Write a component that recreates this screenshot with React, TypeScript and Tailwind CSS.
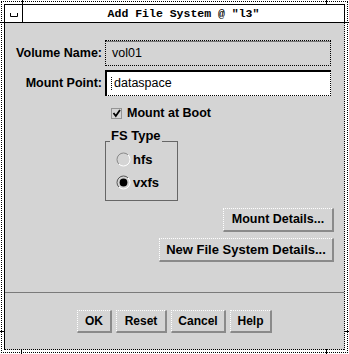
import type { ReactNode } from "react";

function MotifButton({ className, children }: { className: string; children: ReactNode }) {
  return (
    <div
      className={`${className} flex items-center justify-center bg-[#d4d4d4] border border-dotted border-white border-r-2 border-b-2 border-r-[#8a8a8a] border-b-[#8a8a8a] [border-right-style:solid] [border-bottom-style:solid] font-bold leading-none`}
    >
      {children}
    </div>
  );
}

function Radio({ checked }: { checked?: boolean }) {
  return (
    <svg width="15" height="15" viewBox="0 0 15 15">
      <path d="M2.9 12.1 A6.5 6.5 0 0 1 12.1 2.9" fill="none" stroke={checked ? "#555" : "#888"} strokeWidth="1" />
      <path d="M12.1 2.9 A6.5 6.5 0 0 1 2.9 12.1" fill="none" stroke="#fff" strokeWidth="1" />
      {checked && <circle cx="7.5" cy="7.5" r="3.9" fill="#000" />}
    </svg>
  );
}

export default function App() {
  return (
    <div className="relative w-[349px] h-[354px] bg-white p-px text-black font-['Liberation_Sans',sans-serif]">
      <div className="h-full border border-dotted border-black p-[2px] flex flex-col">
        {/* title bar */}
        <div className="h-[19px] flex border border-black bg-white">
          <div className="w-[18px] border-r border-black flex items-center justify-center">
            <svg width="8" height="4" viewBox="0 0 8 4" className="mt-[2px]">
              <path d="M0.5 0 V3.5 H7.5 V0" fill="none" stroke="#000" strokeWidth="1" />
            </svg>
          </div>
          <div className="flex-1 flex items-center justify-center font-['Liberation_Mono',monospace] font-bold text-[11.5px] leading-none">
            Add File System @ "l3"
          </div>
        </div>

        {/* body */}
        <div className="flex-1 flex flex-col bg-[#d4d4d4] border-l border-black border-r border-r-black [border-right-style:dotted]">
          <div className="mt-[17px] flex items-center h-[26px]">
            <div className="w-[97px] text-right text-[12.5px] font-bold">Volume Name:</div>
            <div className="ml-[3px] w-[226px] h-[26px] flex items-center pl-[6px] border border-dotted border-black shadow-[inset_0_1px_0_#7a7a7a] text-[12.5px]">
              vol01
            </div>
          </div>
          <div className="mt-[4px] flex items-center h-[26px]">
            <div className="w-[97px] text-right text-[12.5px] font-bold">Mount Point:</div>
            <div className="ml-[3px] w-[226px] h-[26px] flex items-center pl-[2px] bg-white border-t-2 border-l-2 border-black border-r border-b border-r-black border-b-black [border-right-style:dotted] [border-bottom-style:dotted] text-[12.5px]">
              <span className="w-[4px] h-[13px] mr-[1px] flex justify-center">
                <span className="h-full border-l border-dotted border-black" />
              </span>
              dataspace
            </div>
          </div>

          <div className="mt-[11px] ml-[106px] h-[12px] flex items-center">
            <svg width="11" height="11" viewBox="0 0 11 11">
              <rect x="0.5" y="0.5" width="10" height="10" fill="none" stroke="#555" strokeDasharray="1 1" />
              <path d="M2.5 5 L4.8 8 L9 2" fill="none" stroke="#000" strokeWidth="1.8" />
            </svg>
            <span className="ml-[5px] text-[12.5px] font-bold">Mount at Boot</span>
          </div>

          <div className="relative mt-[22px] ml-[100px] w-[73px] h-[60px] border border-[#666]">
            <span className="absolute left-[4px] top-[-14px] px-px bg-[#d4d4d4] text-[13px] font-bold leading-[15px]">
              FS Type
            </span>
            <div className="mt-[10px] ml-[10px] flex items-center h-[15px]">
              <Radio />
              <span className="ml-[2px] text-[13px] font-bold">hfs</span>
            </div>
            <div className="mt-[8px] ml-[10px] flex items-center h-[15px]">
              <Radio checked />
              <span className="ml-[2px] text-[13px] font-bold">vxfs</span>
            </div>
          </div>

          <div className="mt-[7px] mr-[10px] self-end">
            <MotifButton className="w-[111px] h-[24px] text-[12.5px]">Mount Details...</MotifButton>
          </div>
          <div className="mt-[6px] mr-[10px] self-end">
            <MotifButton className="w-[175px] h-[24px] text-[13px]">New File System Details...</MotifButton>
          </div>

          <div className="mt-[30px] h-px bg-[#7a7a7a]" />

          <div className="mt-[17px] flex justify-center gap-[4px]">
            <MotifButton className="w-[35px] h-[23px] text-[12px]">OK</MotifButton>
            <MotifButton className="w-[51px] h-[23px] text-[12px]">Reset</MotifButton>
            <MotifButton className="w-[55px] h-[23px] text-[12px]">Cancel</MotifButton>
            <MotifButton className="w-[42px] h-[23px] text-[12px]">Help</MotifButton>
          </div>
          <div className="flex-1 border-b border-dotted border-black" />
        </div>
      </div>

      {/* resize handle ticks on the frame */}
      <span className="absolute left-[22px] top-0 w-px h-[4px] bg-black" />
      <span className="absolute left-[326px] top-0 w-px h-[4px] bg-black" />
      <span className="absolute left-[21px] bottom-0 w-px h-[5px] bg-black" />
      <span className="absolute left-[326px] bottom-0 w-px h-[5px] bg-black" />
      <span className="absolute left-0 top-[22px] w-[4px] h-px bg-black" />
      <span className="absolute left-0 top-[331px] w-[4px] h-px bg-black" />
      <span className="absolute right-0 top-[22px] w-[4px] h-px bg-black" />
      <span className="absolute right-0 top-[331px] w-[4px] h-px bg-black" />
    </div>
  );
}
